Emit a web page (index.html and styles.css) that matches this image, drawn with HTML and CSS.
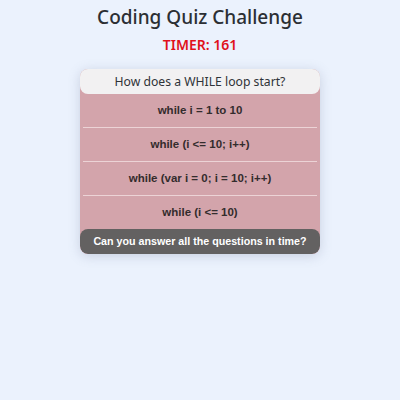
FILE: index.html
```html
<!DOCTYPE html>
<html>
<head>
<meta charset="utf-8">
<link rel="stylesheet" href="styles.css">
</head>
<body>
<header class="top">
  <h1 class="title">Coding Quiz Challenge</h1>
  <div class="timer">TIMER: 161</div>
</header>
<main class="card">
  <div class="question">How does a WHILE loop start?</div>
  <ul class="answers">
    <li class="answer">while i = 1 to 10</li>
    <li class="answer">while (i &lt;= 10; i++)</li>
    <li class="answer">while (var i = 0; i = 10; i++)</li>
    <li class="answer">while (i &lt;= 10)</li>
  </ul>
  <div class="footer">Can you answer all the questions in time?</div>
</main>
</body>
</html>
```
FILE: styles.css
```css
html, body {
  margin: 0;
  padding: 0;
  background: #ebf2fd;
}
body {
  width: 400px;
  height: 400px;
  font-family: "Noto Sans", "Open Sans", sans-serif;
  display: flex;
  flex-direction: column;
  align-items: center;
}
.top {
  display: flex;
  flex-direction: column;
  align-items: center;
}
.title {
  margin: 4px 0 0;
  font-size: 19px;
  font-weight: 500;
  color: #2b2f34;
  line-height: 27px;
}
.timer {
  margin-top: 4px;
  font-size: 14px;
  font-weight: 600;
  color: #e0101a;
  line-height: 20px;
}
.card {
  margin-top: 14px;
  width: 240px;
  border-radius: 8px;
  background: #d3a4ab;
  box-shadow: 0 2px 12px rgba(120, 130, 160, 0.3);
  overflow: hidden;
}
.question {
  background: #f2f1f2;
  border-radius: 0 0 8px 8px;
  height: 25px;
  line-height: 25px;
  text-align: center;
  font-size: 12.2px;
  color: #2f3338;
}
.answers {
  list-style: none;
  margin: 0;
  padding: 0 3px;
}
.answer {
  height: 33px;
  line-height: 33px;
  text-align: center;
  font-family: "Liberation Sans", Arial, sans-serif;
  font-weight: 700;
  font-size: 11.5px;
  color: #332c2d;
  border-bottom: 1px solid #ecd3d6;
}
.answer:last-child {
  border-bottom: none;
}
.footer {
  background: #636161;
  border-radius: 8px;
  height: 25px;
  line-height: 24px;
  text-align: center;
  font-family: "Liberation Sans", Arial, sans-serif;
  font-weight: 700;
  font-size: 10.7px;
  color: #ffffff;
}
```
